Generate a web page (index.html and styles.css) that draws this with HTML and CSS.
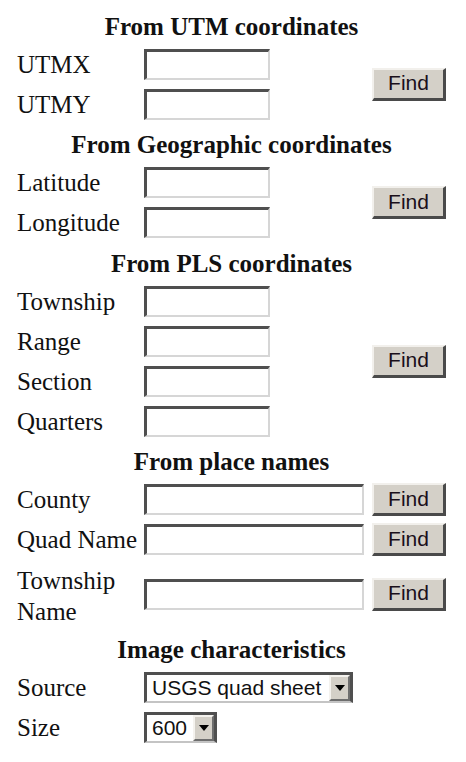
FILE: index.html
```html
<!DOCTYPE html>
<html lang="en">
<head>
<meta charset="utf-8">
<title>Locate a map</title>
<link rel="stylesheet" href="styles.css">
</head>
<body>
<form class="finder">
  <h2 class="section-title">From UTM coordinates</h2>
  <div class="group">
    <label class="field-label">UTMX</label>
    <input class="text-input short" type="text">
    <button class="find-btn span-2" type="button">Find</button>
    <label class="field-label">UTMY</label>
    <input class="text-input short" type="text">
  </div>

  <h2 class="section-title">From Geographic coordinates</h2>
  <div class="group">
    <label class="field-label">Latitude</label>
    <input class="text-input short" type="text">
    <button class="find-btn span-2" type="button">Find</button>
    <label class="field-label">Longitude</label>
    <input class="text-input short" type="text">
  </div>

  <h2 class="section-title">From PLS coordinates</h2>
  <div class="group">
    <label class="field-label">Township</label>
    <input class="text-input short" type="text">
    <button class="find-btn span-4" type="button">Find</button>
    <label class="field-label">Range</label>
    <input class="text-input short" type="text">
    <label class="field-label">Section</label>
    <input class="text-input short" type="text">
    <label class="field-label">Quarters</label>
    <input class="text-input short" type="text">
  </div>

  <h2 class="section-title">From place names</h2>
  <div class="group">
    <label class="field-label">County</label>
    <input class="text-input long" type="text">
    <button class="find-btn" type="button">Find</button>
    <label class="field-label">Quad Name</label>
    <input class="text-input long" type="text">
    <button class="find-btn" type="button">Find</button>
    <label class="field-label two-line">Township Name</label>
    <input class="text-input long" type="text">
    <button class="find-btn" type="button">Find</button>
  </div>

  <h2 class="section-title">Image characteristics</h2>
  <div class="group">
    <label class="field-label">Source</label>
    <div class="select source">
      <span class="select-value">USGS quad sheet</span>
      <span class="select-arrow"><svg width="10" height="6" viewBox="0 0 10 6"><path d="M0 0H10L5 6Z" fill="#000"/></svg></span>
    </div>
    <label class="field-label">Size</label>
    <div class="select size">
      <span class="select-value">600</span>
      <span class="select-arrow"><svg width="10" height="6" viewBox="0 0 10 6"><path d="M0 0H10L5 6Z" fill="#000"/></svg></span>
    </div>
  </div>
</form>
</body>
</html>
```

FILE: styles.css
```css
html, body {
  margin: 0;
  padding: 0;
  background: #fff;
}

.finder {
  width: 429px;
  padding: 5.5px 0 0 17px;
  font-family: "Liberation Serif", "Times New Roman", serif;
  color: #111;
}

.section-title {
  margin: 0;
  padding: 7px 0 3.5px;
  font-size: 25px;
  line-height: 28px;
  font-weight: bold;
  text-align: center;
}

.group {
  display: grid;
  grid-template-columns: 127px 228px 74px;
  align-items: center;
}

.field-label {
  grid-column: 1;
  font-size: 25px;
  line-height: 31px;
  padding: 4.5px 0;
}

/* wrapped label: trim the bottom so the next heading sits closer */
.field-label.two-line {
  padding: 5px 0 2px;
}

.text-input {
  grid-column: 2;
  box-sizing: border-box;
  height: 31px;
  margin: 0;
  padding: 0 4px;
  background: #fff;
  border-style: solid;
  border-width: 3px 2px 2px 3px;
  border-color: #4f4f4f #d6d6d6 #d6d6d6 #4f4f4f;
  outline: none;
  font: 21px "Liberation Sans", Arial, sans-serif;
}

.text-input.short { width: 126px; }
.text-input.long { width: 220px; }

.find-btn {
  grid-column: 3;
  justify-self: start;
  box-sizing: border-box;
  width: 74px;
  height: 33px;
  margin: 0;
  padding: 0 0 1px;
  background: #d4d0c8;
  border-style: solid;
  border-width: 2px 3px 3px 2px;
  border-color: #f2f0ec #4a4a4a #4a4a4a #f2f0ec;
  font: 21px "Liberation Sans", Arial, sans-serif;
  color: #1a0f1a;
}

.find-btn.span-2 { grid-row: span 2; }
.find-btn.span-4 { grid-row: span 4; }

.select {
  grid-column: 2;
  justify-self: start;
  box-sizing: border-box;
  height: 31px;
  display: flex;
  align-items: stretch;
  background: #fff;
  border-style: solid;
  border-width: 3px 3px 2px 3px;
  border-color: #4f4f4f #4f4f4f #c4c4c4 #4f4f4f;
  font: 21px "Liberation Sans", Arial, sans-serif;
  color: #111;
}

.select.source { width: 209px; }
.select.size { width: 73px; }

.select-value {
  flex: 1;
  padding-left: 5px;
  line-height: 26px;
  white-space: nowrap;
  overflow: hidden;
}

.select-arrow {
  box-sizing: border-box;
  width: 21px;
  display: flex;
  align-items: center;
  justify-content: center;
  background: #d4d0c8;
  border-style: solid;
  border-width: 2px;
  border-color: #f4f2ee #6e6e6e #6e6e6e #f4f2ee;
}
```
